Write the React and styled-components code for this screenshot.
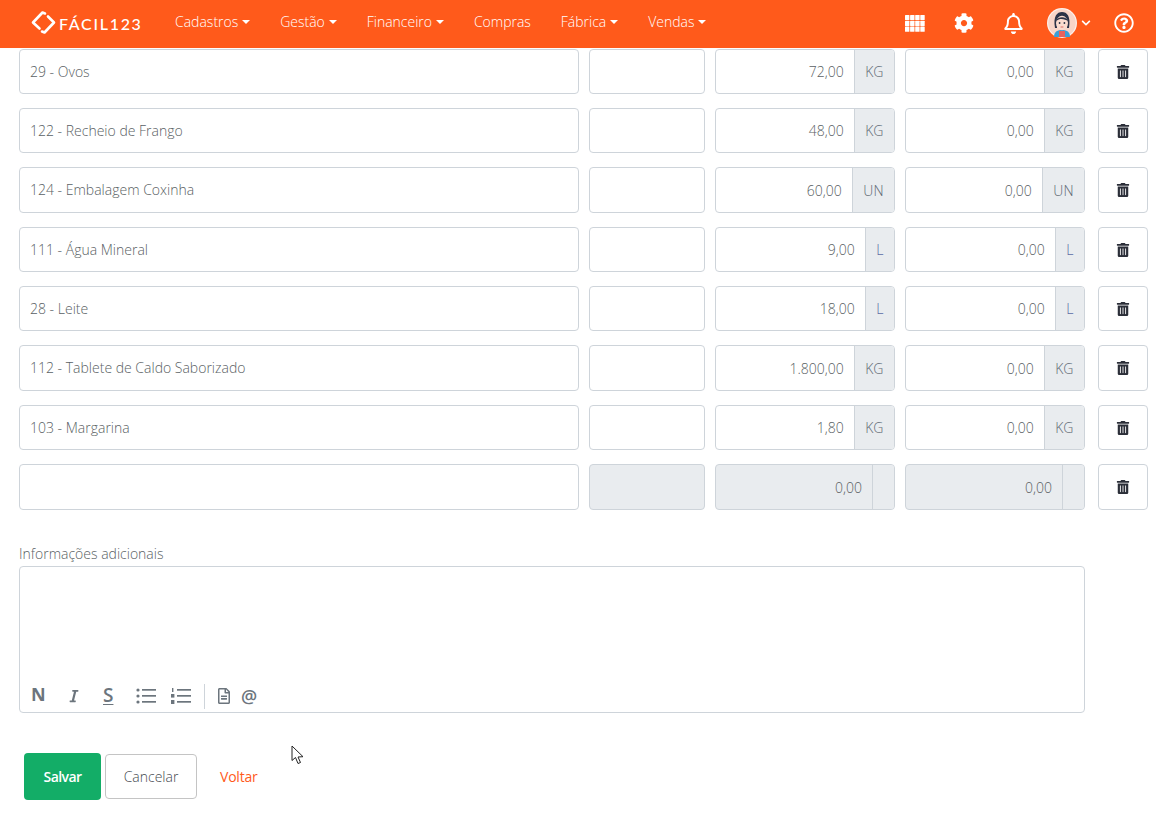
import React from 'react'
import styled, { createGlobalStyle } from 'styled-components'
import { FaCog, FaRegBell, FaChevronDown, FaRegQuestionCircle, FaTrashAlt, FaItalic, FaRegFileAlt } from 'react-icons/fa'

const menus = [
  { label: 'Cadastros', caret: true },
  { label: 'Gestão', caret: true },
  { label: 'Financeiro', caret: true },
  { label: 'Compras' },
  { label: 'Fábrica', caret: true },
  { label: 'Vendas', caret: true },
]

const items = [
  { name: '29 - Ovos', qty: '72,00', unit: 'KG' },
  { name: '122 - Recheio de Frango', qty: '48,00', unit: 'KG' },
  { name: '124 - Embalagem Coxinha', qty: '60,00', unit: 'UN', tall: true },
  { name: '111 - Água Mineral', qty: '9,00', unit: 'L' },
  { name: '28 - Leite', qty: '18,00', unit: 'L' },
  { name: '112 - Tablete de Caldo Saborizado', qty: '1.800,00', unit: 'KG', tall: true },
  { name: '103 - Margarina', qty: '1,80', unit: 'KG' },
  { name: '', qty: '0,00', unit: '', empty: true, tall: true },
]

const App = () => (
  <>
    <Global />
    <Page>
      <Navbar>
        <Logo>
          <svg width="28" height="26" viewBox="0 0 28 26" fill="none" stroke="#fff" strokeWidth="2.6" strokeLinecap="round" strokeLinejoin="round">
            <path d="M9.5 18.5 L3 12.5 L12.5 2.5 L15 3.5" />
            <path d="M18 6.5 L24 12.5 L14.5 22.5 L12 21.5" />
          </svg>
          <LogoText>FÁCIL123</LogoText>
        </Logo>
        <Menu>
          {menus.map((m) => (
            <MenuItem key={m.label} $caret={m.caret}>{m.label}</MenuItem>
          ))}
        </Menu>
        <NavIcons>
          <GridIcon width="20" height="17" viewBox="0 0 20 17" fill="#fff">
            {[0, 5.8, 11.6].map((y) =>
              [0, 5.1, 10.2, 15.3].map((x) => <rect key={`${x}-${y}`} x={x} y={y} width="4.4" height="5.1" rx="0.5" />)
            )}
          </GridIcon>
          <FaCog size={20} />
          <BellSlot><FaRegBell size={21} /></BellSlot>
          <AvatarWrap>
            <svg width="30" height="30" viewBox="0 0 30 30">
              <circle cx="15" cy="15" r="15" fill="#fdf1ec" />
              <circle cx="15" cy="15" r="13.8" fill="#f8d5c8" />
              <path d="M7 29 C7 23 11 22 15 22 C19 22 23 23 23 29 Z" fill="#3d9fd6" />
              <path d="M12 29 L12 23 L18 23 L18 29 Z" fill="#e8635c" />
              <path d="M8 20 C6 8 10 4 15 4 C20 4 24 8 22 20 L20 20 L20 12 L10 12 L10 20 Z" fill="#2c3347" />
              <ellipse cx="15" cy="15" rx="6" ry="7.2" fill="#fbdccf" />
              <path d="M9 13 C10 8 20 8 21 13 C18 11 13 9.5 9 13 Z" fill="#2c3347" />
              <circle cx="12.6" cy="15" r="0.9" fill="#2c3347" />
              <circle cx="17.4" cy="15" r="0.9" fill="#2c3347" />
              <path d="M13.6 19 H16.4" stroke="#d9605a" strokeWidth="0.9" />
            </svg>
            <FaChevronDown size={10} />
          </AvatarWrap>
          <FaRegQuestionCircle size={20} />
        </NavIcons>
      </Navbar>

      <Rows>
        {items.map((it, i) => (
          <Row key={i} $tall={it.tall}>
            <Field />
            <Field $disabled={it.empty} />
            <Amount qty={it.qty} unit={it.unit} disabled={it.empty} />
            <Amount qty="0,00" unit={it.unit} disabled={it.empty} />
            <TrashButton><FaTrashAlt size={14} /></TrashButton>
            <NameText>{it.name}</NameText>
          </Row>
        ))}
      </Rows>

      <Label>Informações adicionais</Label>
      <Editor>
        <Toolbar>
          <BoldMark>N</BoldMark>
          <ToolIcon $w={36}><FaItalic size={14} /></ToolIcon>
          <StrikeMark>S</StrikeMark>
          <ToolIcon $w={35}>
            <svg width="20" height="16" viewBox="0 0 20 16" fill="#6c757d">
              <circle cx="2" cy="2" r="1.6" />
              <circle cx="2" cy="8" r="1.6" />
              <circle cx="2" cy="14" r="1.6" />
              <rect x="6" y="1" width="14" height="1.7" />
              <rect x="6" y="7" width="14" height="1.7" />
              <rect x="6" y="13" width="14" height="1.7" />
            </svg>
          </ToolIcon>
          <ToolIcon $w={33}>
            <svg width="20" height="16" viewBox="0 0 20 16" fill="#6c757d">
              <rect x="1" y="0" width="1.4" height="4" />
              <rect x="0" y="6" width="3.4" height="3.6" />
              <rect x="0" y="12" width="3.4" height="4" />
              <rect x="6" y="1" width="14" height="1.7" />
              <rect x="6" y="7" width="14" height="1.7" />
              <rect x="6" y="13" width="14" height="1.7" />
            </svg>
          </ToolIcon>
          <ToolDivider />
          <ToolIcon $w={25}><FaRegFileAlt size={16} /></ToolIcon>
          <AtMark>@</AtMark>
        </Toolbar>
      </Editor>

      <Actions>
        <SaveButton>Salvar</SaveButton>
        <CancelButton>Cancelar</CancelButton>
        <BackLink>Voltar</BackLink>
        <Cursor width="14" height="20" viewBox="0 0 14 20">
          <path d="M1 1 L1 15.5 L4.5 12.5 L7 18.5 L9.5 17.5 L7 12 L12 11.7 Z" fill="#fff" stroke="#222" strokeWidth="1" strokeLinejoin="round" />
        </Cursor>
      </Actions>
    </Page>
  </>
)

const Amount = ({ qty, unit, disabled }) => (
  <Group $disabled={disabled}>
    <Value>{qty}</Value>
    <Unit $blue={unit === 'L'}>{unit}</Unit>
  </Group>
)

const Global = createGlobalStyle`
  html, body { margin: 0; padding: 0; background: #fff; }
  body { font-family: "Open Sans", sans-serif; font-size: 14px; font-weight: 300; color: #5a5f64; }
  * { box-sizing: border-box; }
`

const Page = styled.div`
  width: 1156px;
  height: 829px;
  overflow: hidden;
`

const Navbar = styled.nav`
  display: flex;
  align-items: center;
  height: 48px;
  padding: 0 22px 2px 30px;
  background: #ff5a1b;
  color: #fff;
`

const Logo = styled.div`
  display: flex;
  align-items: center;
  gap: 1px;
  width: 145px;
`

const LogoText = styled.span`
  font-family: Lato, sans-serif;
  font-size: 16px;
  font-weight: 500;
  letter-spacing: 1.7px;
`

const Menu = styled.div`
  display: flex;
  gap: 29.9px;
`

const MenuItem = styled.span`
  font-size: 14px;
  font-weight: 300;
  line-height: 19px;
  margin-top: -4px;

  ${(p) => p.$caret && `
    &::after {
      content: '';
      display: inline-block;
      margin-left: 4px;
      vertical-align: 3px;
      border-top: 4px solid #fff;
      border-left: 4px solid transparent;
      border-right: 4px solid transparent;
    }
  `}
`

const NavIcons = styled.div`
  display: flex;
  align-items: center;
  gap: 29px;
  margin-left: auto;
`

const GridIcon = styled.svg`
  display: block;
`

const BellSlot = styled.span`
  display: flex;
  margin-right: -6px;
`

const AvatarWrap = styled.div`
  display: flex;
  align-items: center;
  gap: 4px;
  margin-right: -6px;
`

const Rows = styled.div`
  display: flex;
  flex-direction: column;
  gap: 14px;
  padding: 1px 8px 0 19px;
`

const Row = styled.div`
  position: relative;
  display: grid;
  grid-template-columns: 560px 116px 180px 180px 50px;
  column-gap: 10px;
  height: ${(p) => (p.$tall ? 46 : 45)}px;

  & > :nth-child(5) {
    margin-left: 3px;
  }
`

const Field = styled.div`
  border: 1px solid #ced4da;
  border-radius: 4px;
  background: ${(p) => (p.$disabled ? '#e9ecef' : '#fff')};
`

const NameText = styled.span`
  position: absolute;
  left: 11px;
  top: calc(50% - 1px);
  transform: translateY(-50%);
`

const Group = styled.div`
  display: flex;
  border: 1px solid #ced4da;
  border-radius: 4px;
  overflow: hidden;
  background: ${(p) => (p.$disabled ? '#e9ecef' : '#fff')};
`

const Value = styled.div`
  flex: 1;
  display: flex;
  align-items: center;
  justify-content: flex-end;
  padding-right: 10px;
`

const Unit = styled.div`
  display: flex;
  align-items: center;
  padding: 0 10.5px;
  min-width: 22px;
  background: #e9ecef;
  border-left: 1px solid #ced4da;
  color: ${(p) => (p.$blue ? '#5b6ba5' : '#5f6a74')};
`

const TrashButton = styled.button`
  display: flex;
  align-items: center;
  justify-content: center;
  width: 50px;
  padding: 0;
  border: 1px solid #ced4da;
  border-radius: 4px;
  background: #fff;
  color: #2b2e38;
`

const Label = styled.div`
  margin: 34px 0 0 19px;
  height: 19px;
  line-height: 19px;
`

const Editor = styled.div`
  display: flex;
  align-items: flex-end;
  width: 1066px;
  height: 147px;
  margin: 3px 0 0 19px;
  border: 1px solid #ced4da;
  border-radius: 4px;
`

const Toolbar = styled.div`
  display: flex;
  align-items: center;
  height: 26px;
  margin-bottom: 3px;
  padding-left: 11px;
  color: #6c757d;
`

const BoldMark = styled.span`
  width: 36px;
  margin-top: -4px;
  font-size: 18px;
  font-weight: 700;
`

const StrikeMark = styled.span`
  width: 33px;
  margin-top: -3px;
  font-size: 19px;
  font-weight: 600;
  text-decoration: underline;
  text-underline-offset: 2px;
`

const ToolIcon = styled.span`
  display: flex;
  width: ${(p) => p.$w}px;
`

const AtMark = styled.span`
  font-size: 18px;
  font-weight: 600;
`

const ToolDivider = styled.span`
  width: 1px;
  height: 25px;
  margin: 0 11px 0 0;
  background: #ced4da;
`

const Actions = styled.div`
  position: relative;
  display: flex;
  align-items: center;
  height: 47px;
  margin: 40px 0 0 24px;
`

const SaveButton = styled.button`
  width: 77px;
  height: 47px;
  border: 0;
  border-radius: 4px;
  background: #13ad67;
  color: #fff;
  font: 600 14px "Open Sans", sans-serif;
  letter-spacing: -0.6px;
`

const CancelButton = styled.button`
  width: 92px;
  height: 45px;
  margin-left: 4px;
  border: 1px solid #c4c4c4;
  border-radius: 4px;
  background: #fff;
  color: #454a4f;
  font: 300 14px "Open Sans", sans-serif;
`

const BackLink = styled.span`
  margin-left: 23px;
  color: #ff5a1b;
  font-weight: 400;
  letter-spacing: -0.2px;
`

const Cursor = styled.svg`
  position: absolute;
  left: 267px;
  top: -8px;
`

export default App
